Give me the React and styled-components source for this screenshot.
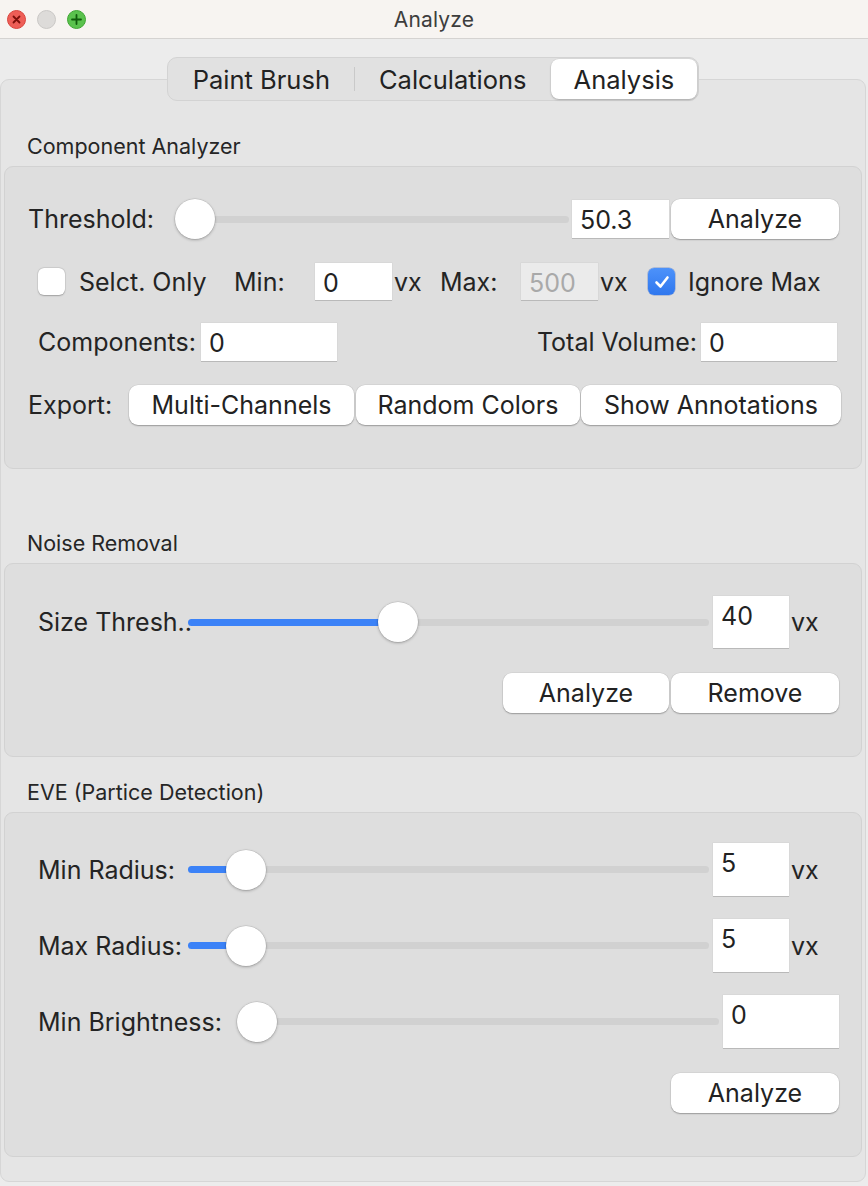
import React from 'react';
import styled, { createGlobalStyle } from 'styled-components';

const GlobalStyle = createGlobalStyle`
  html, body {
    margin: 0;
    padding: 0;
    background: #ececec;
  }
  body {
    font-family: Inter, "Liberation Sans", sans-serif;
    color: #242424;
  }
  * { box-sizing: border-box; }
`;

/* --- window frame --- */
const Window = styled.div`
  width: 868px;
  height: 1186px;
  display: flex;
  flex-direction: column;
  background: #ececec;
  overflow: hidden;
`;

const TitleBar = styled.div`
  height: 39px;
  flex: none;
  display: grid;
  grid-template-columns: 1fr auto 1fr;
  align-items: center;
  background: #f7f4f1;
  border-bottom: 1px solid #d5d3d1;
`;

const Lights = styled.div`
  display: flex;
  align-items: center;
  gap: 11px;
  padding-left: 7px;
`;

const Light = styled.div`
  width: 19px;
  height: 19px;
  border-radius: 50%;
  background: ${p => p.$bg};
  border: 1px solid ${p => p.$border};
  display: flex;
  align-items: center;
  justify-content: center;
`;

const WindowTitle = styled.div`
  font-size: 21px;
  color: #3d3d3d;
  letter-spacing: 0.2px;
`;

const Body = styled.div`
  flex: 1;
  display: flex;
  flex-direction: column;
  padding: 18px 2px 0 0;
`;

/* --- segmented tabs --- */
const SegWrap = styled.div`
  display: flex;
  justify-content: center;
  margin-bottom: -22px;
  position: relative;
  z-index: 1;
`;

const Segmented = styled.div`
  display: inline-flex;
  align-items: center;
  height: 44px;
  padding: 1px;
  background: #e1e1e1;
  border: 1px solid #d3d3d3;
  border-radius: 10px;
`;

const Segment = styled.div`
  height: 40px;
  padding: 0 ${p => p.$pad}px;
  display: flex;
  align-items: center;
  font-size: 25.5px;
  color: #222;
  border-radius: 8px;
  background: ${p => (p.$active ? '#fff' : 'transparent')};
  box-shadow: ${p => (p.$active ? '0 1px 2px rgba(0,0,0,0.22), 0 0 0 0.5px rgba(0,0,0,0.06)' : 'none')};
`;

const SegDivider = styled.span`
  width: 1px;
  height: 24px;
  background: #c9c9c9;
`;

const TabBox = styled.div`
  background: #e5e5e5;
  border: 1px solid #d6d6d6;
  border-radius: 9px;
  padding: 54px 3px 24px;
  display: flex;
  flex-direction: column;
`;

/* --- sections --- */
const SectionTitle = styled.div`
  font-size: 21.5px;
  line-height: 24px;
  padding-left: 23px;
  margin-top: ${p => p.$top || 0}px;
  margin-bottom: 8px;
  color: #262626;
`;

const Group = styled.div`
  background: #dedede;
  border: 1px solid #d2d2d2;
  border-radius: 9px;
  padding: ${p => p.$pt}px 0 43px;
  display: flex;
  flex-direction: column;
`;

const Row = styled.div`
  height: ${p => p.$h}px;
  margin-top: ${p => p.$mt || 0}px;
  display: flex;
  align-items: center;
  padding: 0 22px 0 ${p => p.$indent || 0}px;
  justify-content: ${p => (p.$end ? 'flex-end' : 'flex-start')};
`;

const Label = styled.span`
  font-size: 25px;
  line-height: 30px;
  white-space: nowrap;
  flex: none;
  width: ${p => (p.$w ? `${p.$w}px` : 'auto')};
  margin-left: ${p => p.$ml || 0}px;
`;

const Spacer = styled.div`
  flex: 1;
`;

const Field = styled.div`
  flex: none;
  width: ${p => p.$w}px;
  height: ${p => p.$h}px;
  margin-left: ${p => p.$ml || 0}px;
  margin-right: ${p => p.$mr || 0}px;
  padding: 5px 0 0 8px;
  font-size: 25px;
  line-height: 30px;
  background: ${p => (p.$disabled ? '#ebebeb' : '#fff')};
  color: ${p => (p.$disabled ? '#a9a9a9' : '#222')};
  box-shadow: 0 1px 0 #b9b9b9, 0 0 0 0.5px rgba(0,0,0,0.05);
`;

const Button = styled.button`
  flex: none;
  width: ${p => p.$w}px;
  height: 40px;
  margin-left: ${p => p.$ml || 0}px;
  border: none;
  border-radius: 9px;
  background: #fff;
  font-family: inherit;
  font-size: 25px;
  color: #222;
  padding: 0;
  box-shadow: 0 1px 1.5px rgba(0,0,0,0.28), 0 0 0 0.5px rgba(0,0,0,0.08);
`;

const Check = styled.span`
  flex: none;
  width: 27px;
  height: 27px;
  border-radius: 6px;
  display: flex;
  align-items: center;
  justify-content: center;
  background: ${p => (p.$on ? 'linear-gradient(#4d92fa, #2f77ee)' : '#fff')};
  box-shadow: ${p => (p.$on ? '0 0 0 0.5px rgba(0,60,180,0.4)' : '0 0.5px 1.5px rgba(0,0,0,0.25), 0 0 0 0.5px rgba(0,0,0,0.08)')};
`;

/* --- slider --- */
const SliderBox = styled.div`
  position: relative;
  height: 40px;
  flex: ${p => (p.$w ? 'none' : '1')};
  width: ${p => (p.$w ? `${p.$w}px` : 'auto')};
  margin-left: ${p => p.$ml || 0}px;
  display: flex;
  align-items: center;
`;

const Track = styled.div`
  position: relative;
  width: 100%;
  height: 7px;
  border-radius: 4px;
  background: #d1d1d1;
`;

const Fill = styled.div`
  position: absolute;
  left: 0;
  top: 0;
  bottom: 0;
  border-radius: 4px;
  background: #3b82f7;
`;

const Knob = styled.div`
  position: absolute;
  top: 0;
  width: 40px;
  height: 40px;
  border-radius: 50%;
  background: #fff;
  box-shadow: 0 1px 3px rgba(0,0,0,0.28), 0 0 0 0.5px rgba(0,0,0,0.12);
`;

function Slider({ w, ml, pos = 0, fill = false }) {
  // pos = knob left offset in px along the track
  return (
    <SliderBox $w={w} $ml={ml}>
      <Track>{fill && <Fill style={{ width: pos + 20 }} />}</Track>
      <Knob style={{ left: pos }} />
    </SliderBox>
  );
}

function CheckMark() {
  return (
    <svg width="18" height="18" viewBox="0 0 18 18">
      <path d="M3.5 9.5 L7.5 13.5 L14.5 4.5" fill="none" stroke="#fff" strokeWidth="2.6" strokeLinecap="round" strokeLinejoin="round" />
    </svg>
  );
}

export default function App() {
  return (
    <>
      <GlobalStyle />
      <Window>
        <TitleBar>
          <Lights>
            <Light $bg="#ee5e57" $border="#d9443d">
              <svg width="9" height="9" viewBox="0 0 9 9">
                <path d="M1.5 1.5 L7.5 7.5 M7.5 1.5 L1.5 7.5" stroke="#7c0f0a" strokeWidth="1.8" strokeLinecap="round" />
              </svg>
            </Light>
            <Light $bg="#dddbd9" $border="#cac8c6" />
            <Light $bg="#5ac24d" $border="#3fa633">
              <svg width="11" height="11" viewBox="0 0 11 11">
                <path d="M5.5 1 L5.5 10 M1 5.5 L10 5.5" stroke="#0f5c0b" strokeWidth="1.8" strokeLinecap="round" />
              </svg>
            </Light>
          </Lights>
          <WindowTitle>Analyze</WindowTitle>
          <div />
        </TitleBar>

        <Body>
          <SegWrap>
            <Segmented>
              <Segment $pad={24}>Paint Brush</Segment>
              <SegDivider />
              <Segment $pad={24}>Calculations</Segment>
              <Segment $pad={23} $active>Analysis</Segment>
            </Segmented>
          </SegWrap>

          <TabBox>
            <SectionTitle>Component Analyzer</SectionTitle>
            <Group $pt={32}>
              <Row $h={40} $indent={23}>
                <Label>Threshold:</Label>
                <Slider ml={21} pos={0} />
                <Field $w={97} $h={38} $ml={3}>50.3</Field>
                <Button $w={168} $ml={2}>Analyze</Button>
              </Row>
              <Row $h={37} $mt={24} $indent={33}>
                <Check />
                <Label $w={155} $ml={14}>Selct. Only</Label>
                <Label $w={81}>Min:</Label>
                <Field $w={77} $h={37}>0</Field>
                <Label $w={46} $ml={2}>vx</Label>
                <Label $w={81}>Max:</Label>
                <Field $w={77} $h={37} $disabled>500</Field>
                <Label $w={48} $ml={2}>vx</Label>
                <Check $on><CheckMark /></Check>
                <Label $ml={13}>Ignore Max</Label>
              </Row>
              <Row $h={38} $mt={23} $indent={33}>
                <Label $w={163}>Components:</Label>
                <Field $w={136} $h={38}>0</Field>
                <Spacer />
                <Label>Total Volume:</Label>
                <Field $w={136} $h={38} $ml={4} $mr={2}>0</Field>
              </Row>
              <Row $h={40} $mt={24} $indent={23}>
                <Label $w={101}>Export:</Label>
                <Button $w={225}>Multi-Channels</Button>
                <Button $w={224} $ml={2}>Random Colors</Button>
                <Button $w={260} $ml={1}>Show Annotations</Button>
              </Row>
            </Group>

            <SectionTitle $top={62}>Noise Removal</SectionTitle>
            <Group $pt={32}>
              <Row $h={52} $indent={33}>
                <Label $w={150}>Size Thresh..</Label>
                <Slider w={521} pos={190} fill />
                <Field $w={76} $h={52} $ml={4}>40</Field>
                <Label $ml={2}>vx</Label>
              </Row>
              <Row $h={40} $mt={25} $end>
                <Button $w={166}>Analyze</Button>
                <Button $w={168} $ml={2}>Remove</Button>
              </Row>
            </Group>

            <SectionTitle $top={23}>EVE (Partice Detection)</SectionTitle>
            <Group $pt={30}>
              <Row $h={53} $indent={33}>
                <Label $w={150}>Min Radius:</Label>
                <Slider w={521} pos={38} fill />
                <Field $w={76} $h={53} $ml={4}>5</Field>
                <Label $ml={2}>vx</Label>
              </Row>
              <Row $h={53} $mt={23} $indent={33}>
                <Label $w={150}>Max Radius:</Label>
                <Slider w={521} pos={38} fill />
                <Field $w={76} $h={53} $ml={4}>5</Field>
                <Label $ml={2}>vx</Label>
              </Row>
              <Row $h={53} $mt={23} $indent={33}>
                <Label $w={199}>Min Brightness:</Label>
                <Slider w={482} pos={0} />
                <Field $w={116} $h={53} $ml={4}>0</Field>
              </Row>
              <Row $h={40} $mt={25} $end>
                <Button $w={168}>Analyze</Button>
              </Row>
            </Group>
          </TabBox>
        </Body>
      </Window>
    </>
  );
}
